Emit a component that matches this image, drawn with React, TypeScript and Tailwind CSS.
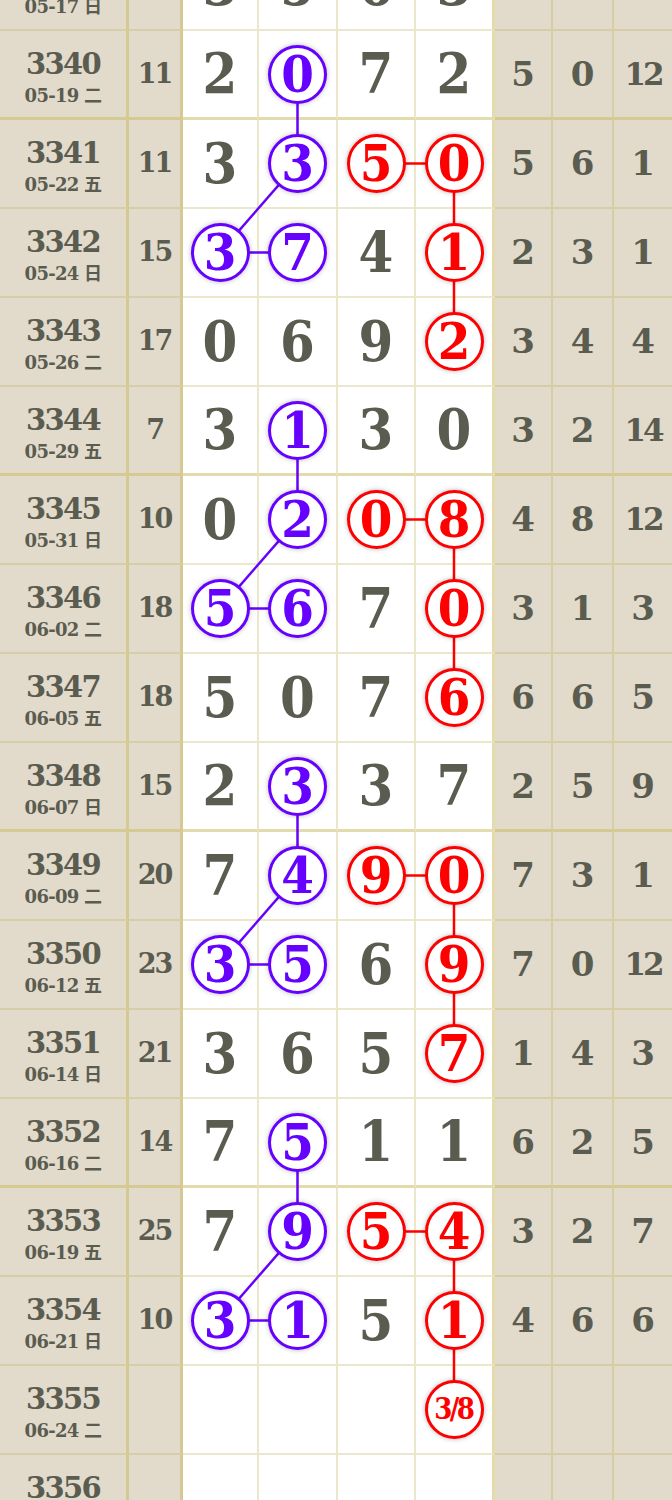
import React from 'react'

type Row = {
  no: number
  date: string
  sum: string
  d: string[]
  r: string[]
}

const ROWS: Row[] = [
  { no: 3339, date: '05-17 日', sum: '9', d: ['3', '5', '6', '3'], r: ['7', '7', '7'] },
  { no: 3340, date: '05-19 二', sum: '11', d: ['2', '0', '7', '2'], r: ['5', '0', '12'] },
  { no: 3341, date: '05-22 五', sum: '11', d: ['3', '3', '5', '0'], r: ['5', '6', '1'] },
  { no: 3342, date: '05-24 日', sum: '15', d: ['3', '7', '4', '1'], r: ['2', '3', '1'] },
  { no: 3343, date: '05-26 二', sum: '17', d: ['0', '6', '9', '2'], r: ['3', '4', '4'] },
  { no: 3344, date: '05-29 五', sum: '7', d: ['3', '1', '3', '0'], r: ['3', '2', '14'] },
  { no: 3345, date: '05-31 日', sum: '10', d: ['0', '2', '0', '8'], r: ['4', '8', '12'] },
  { no: 3346, date: '06-02 二', sum: '18', d: ['5', '6', '7', '0'], r: ['3', '1', '3'] },
  { no: 3347, date: '06-05 五', sum: '18', d: ['5', '0', '7', '6'], r: ['6', '6', '5'] },
  { no: 3348, date: '06-07 日', sum: '15', d: ['2', '3', '3', '7'], r: ['2', '5', '9'] },
  { no: 3349, date: '06-09 二', sum: '20', d: ['7', '4', '9', '0'], r: ['7', '3', '1'] },
  { no: 3350, date: '06-12 五', sum: '23', d: ['3', '5', '6', '9'], r: ['7', '0', '12'] },
  { no: 3351, date: '06-14 日', sum: '21', d: ['3', '6', '5', '7'], r: ['1', '4', '3'] },
  { no: 3352, date: '06-16 二', sum: '14', d: ['7', '5', '1', '1'], r: ['6', '2', '5'] },
  { no: 3353, date: '06-19 五', sum: '25', d: ['7', '9', '5', '4'], r: ['3', '2', '7'] },
  { no: 3354, date: '06-21 日', sum: '10', d: ['3', '1', '5', '1'], r: ['4', '6', '6'] },
  { no: 3355, date: '06-24 二', sum: '', d: ['', '', '', '3/8'], r: ['', '', ''] },
  { no: 3356, date: '06-26 五', sum: '', d: ['', '', '', ''], r: ['', '', ''] },
]

const ROW_H = 89
const GROUPS = [1, 5, 9, 13]
const MAIN_X = [220, 297.5, 376, 454]
const BLUE = '#6600ff'
const RED = '#ff0000'

// marks: key "row-col" -> colour
const marks = new Map<string, string>()
GROUPS.forEach(g => {
  marks.set(`${g}-1`, BLUE)
  marks.set(`${g + 1}-1`, BLUE)
  marks.set(`${g + 2}-0`, BLUE)
  marks.set(`${g + 2}-1`, BLUE)
  marks.set(`${g + 1}-2`, RED)
  marks.set(`${g + 1}-3`, RED)
  marks.set(`${g + 2}-3`, RED)
  marks.set(`${g + 3}-3`, RED)
})

const cy = (row: number) => row * ROW_H + 43.5

const LINES = GROUPS.flatMap(g => [
  { c: BLUE, a: [1, g], b: [1, g + 1] },
  { c: BLUE, a: [1, g + 1], b: [0, g + 2] },
  { c: BLUE, a: [0, g + 2], b: [1, g + 2] },
  { c: RED, a: [2, g + 1], b: [3, g + 1] },
  { c: RED, a: [3, g + 1], b: [3, g + 3] },
])

const FONT = "font-['DejaVu_Serif','Noto_Sans_CJK_SC',serif] font-bold"
const TXT = 'text-[#5a5c50]'
const thin = 'border-[rgba(190,175,80,0.3)]'

function Circle({ value, color }: { value: string; color: string }) {
  const small = value.length > 1
  return (
    <div
      className={`relative z-10 flex h-[59px] w-[59px] items-center justify-center rounded-full border-[3px] bg-white shadow-[0_0_5px_rgba(0,0,0,0.28)] ${
        small ? 'text-[29px] tracking-[-0.1em]' : 'text-[47px]'
      }`}
      style={{ borderColor: color, color }}
    >
      <span className={`inline-block leading-none ${small ? 'scale-x-[0.9] pr-[2px]' : 'scale-y-[1.08]'}`}>{value}</span>
    </div>
  )
}

function TableRow({ row, index }: { row: Row; index: number }) {
  const thick = GROUPS.includes(index)
  const bb = thick ? 'border-b-[3px]' : 'border-b-2'
  const bcol = thick ? 'border-b-[rgba(200,185,90,0.5)]' : ''
  const beige = `bg-[#e2dacb] ${bb} ${thin} ${bcol}`
  const white = `bg-white ${bb} ${thin} ${bcol}`

  return (
    <div className={`flex h-[89px] ${FONT} ${TXT}`}>
      <div className={`flex w-[129px] flex-col items-center justify-center border-r-[3px] border-r-[rgba(200,185,90,0.5)] pt-[6px] ${beige}`}>
        <div className="text-[29px] leading-none tracking-[-0.06em]">{row.no}</div>
        <div className="mt-[8px] text-[18px] leading-none tracking-[-0.04em]">{row.date}</div>
      </div>
      <div className={`flex w-[54px] items-center justify-center border-r-[3px] border-r-[rgba(200,185,90,0.5)] text-[27px] tracking-[-0.08em] ${beige}`}>
        {row.sum}
      </div>
      {row.d.map((v, c) => {
        const color = marks.get(`${index}-${c}`)
        const w = ['w-[76px] border-r-2', 'w-[79px] border-r-2', 'w-[78px] border-r-2', 'w-[79px] border-r-[3px] border-r-[rgba(200,185,90,0.5)]'][c]
        return (
          <div key={c} className={`flex items-center justify-center ${w} ${white}`}>
            {color || v === '3/8' ? (
              <Circle value={v} color={color || RED} />
            ) : (
              <span className="inline-block scale-y-[1.12] text-[50px] leading-none">{v}</span>
            )}
          </div>
        )
      })}
      {row.r.map((v, c) => {
        const w = ['w-[58px] border-r-2', 'w-[61px] border-r-2', 'w-[58px]'][c]
        return (
          <div key={c} className={`flex items-center justify-center ${w} ${beige} ${v.length > 1 ? 'text-[31px] tracking-[-0.1em]' : 'text-[34px]'}`}>
            {v}
          </div>
        )
      })}
    </div>
  )
}

export default function App() {
  return (
    <div className="h-[1500px] w-[672px] overflow-hidden bg-white">
      <div className="relative -mt-[58px]">
        {ROWS.map((row, i) => (
          <TableRow key={row.no} row={row} index={i} />
        ))}
        <svg
          className="pointer-events-none absolute left-0 top-0 z-[5]"
          width={672}
          height={ROWS.length * ROW_H}
        >
          {LINES.map((l, i) => (
            <line
              key={i}
              x1={MAIN_X[l.a[0]]}
              y1={cy(l.a[1])}
              x2={MAIN_X[l.b[0]]}
              y2={cy(l.b[1])}
              stroke={l.c}
              strokeWidth={2.5}
            />
          ))}
        </svg>
      </div>
    </div>
  )
}
